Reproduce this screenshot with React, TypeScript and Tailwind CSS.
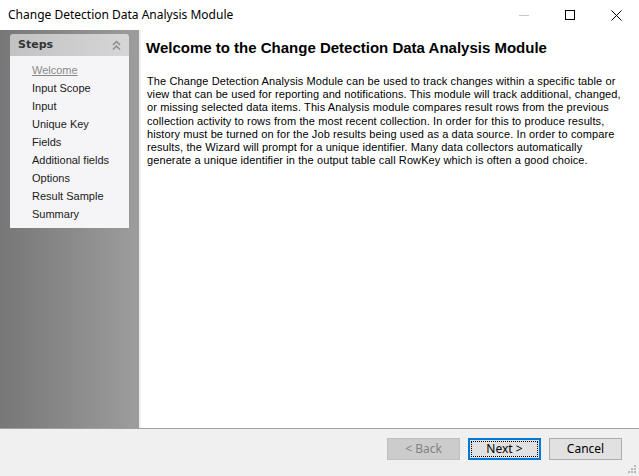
import React from "react";

const steps = [
  "Welcome",
  "Input Scope",
  "Input",
  "Unique Key",
  "Fields",
  "Additional fields",
  "Options",
  "Result Sample",
  "Summary",
];

const bodyLines = [
  "The Change Detection Analysis Module can be used to track changes within a specific table or",
  "view that can be used for reporting and notifications. This module will track additional, changed,",
  "or missing selected data items. This Analysis module compares result rows from the previous",
  "collection activity to rows from the most recent collection. In order for this to produce results,",
  "history must be turned on for the Job results being used as a data source. In order to compare",
  "results, the Wizard will prompt for a unique identifier. Many data collectors automatically",
  "generate a unique identifier in the output table call RowKey which is often a good choice.",
];

function TitleBar() {
  return (
    <div className="flex h-[30px] items-center bg-white pl-[8px]">
      <span className="flex-1 text-[12px] text-black" style={{ fontFamily: '"Noto Sans", "Open Sans", sans-serif' }}>
        Change Detection Data Analysis Module
      </span>
      <div className="flex h-full">
        <div className="flex w-[46px] items-center justify-center">
          <div className="h-px w-[10px] bg-[#c8c8c8]" />
        </div>
        <div className="flex w-[46px] items-center justify-center">
          <div className="h-[10px] w-[10px] border border-black" />
        </div>
        <div className="flex w-[46px] items-center justify-center">
          <svg width="11" height="11" viewBox="0 0 11 11">
            <path d="M0.5 0.5 L10.5 10.5 M10.5 0.5 L0.5 10.5" stroke="black" strokeWidth="1" fill="none" />
          </svg>
        </div>
      </div>
    </div>
  );
}

function StepsPanel() {
  return (
    <div className="w-[139px] shrink-0 bg-gradient-to-r from-[#777777] to-[#9d9d9d] px-[10px] pt-[4px]">
      <div className="rounded-t-[3px] bg-gradient-to-r from-[#c2c2c2] to-[#d6d6d6] flex h-[22px] items-center justify-between pl-[8px] pr-[8px]">
        <span className="text-[11px] font-bold text-[#333333]" style={{ fontFamily: "Tahoma, Verdana, 'DejaVu Sans', sans-serif" }}>
          Steps
        </span>
        <svg width="9" height="11" viewBox="0 0 9 11">
          <path d="M1 5 L4.5 1.5 L8 5 M1 9.5 L4.5 6 L8 9.5" stroke="#8a8a8a" strokeWidth="1.5" fill="none" />
        </svg>
      </div>
      <div className="flex flex-col bg-[#f5f5f7] pb-[5px] pl-[22px] pt-[5px]">
        {steps.map((s, i) => (
          <span
            key={s}
            className={
              i === 0
                ? "h-[18px] text-[11px] leading-[18px] text-[#8a8a8a] underline"
                : "h-[18px] text-[11px] leading-[18px] text-[#1a1a1a]"
            }
            style={{ fontFamily: "'Liberation Sans', Arial, sans-serif" }}
          >
            {s}
          </span>
        ))}
      </div>
    </div>
  );
}

function Button({ label, disabled, focused }: { label: string; disabled?: boolean; focused?: boolean }) {
  if (disabled) {
    return (
      <div className="flex h-[22px] w-[73px] items-center justify-center border border-[#bfbfbf] bg-[#cccccc] text-[12px] text-[#838383]">
        {label}
      </div>
    );
  }
  if (focused) {
    return (
      <div className="flex h-[22px] w-[73px] items-center justify-center border-2 border-[#0078d7] bg-[#e1e1e1] p-[1px]">
        <div className="flex h-full w-full items-center justify-center border border-dotted border-black text-[12px] text-black">
          {label}
        </div>
      </div>
    );
  }
  return (
    <div className="flex h-[22px] w-[73px] items-center justify-center border border-[#adadad] bg-[#e1e1e1] text-[12px] text-black">
      {label}
    </div>
  );
}

export default function App() {
  return (
    <div className="flex h-[476px] w-[639px] flex-col overflow-hidden bg-white" style={{ fontFamily: "'Liberation Sans', Arial, sans-serif" }}>
      <TitleBar />
      <div className="flex flex-1 border-b border-[#a0a0a0]">
        <StepsPanel />
        <div className="w-[2px] bg-[#f0f0f0]" />
        <div className="flex-1 bg-white pl-[5px] pt-[9px]">
          <h1 className="text-[15px] font-bold leading-[18px] text-black" style={{ fontFamily: "'Liberation Sans', Arial, sans-serif" }}>
            Welcome to the Change Detection Data Analysis Module
          </h1>
          <div className="mt-[18px] pl-[1px] text-[11px] leading-[13.3px] tracking-[0.1px] text-black">
            {bodyLines.map((l) => (
              <div key={l} className="h-[13.2px] whitespace-nowrap">
                {l}
              </div>
            ))}
          </div>
        </div>
      </div>
      <div className="relative flex h-[47px] items-start justify-end gap-[8px] bg-[#f0f0f0] pr-[17px] pt-[9px]" style={{ fontFamily: "'Noto Sans', 'Open Sans', sans-serif" }}>
        <Button label="< Back" disabled />
        <Button label="Next >" focused />
        <Button label="Cancel" />
        <svg className="absolute bottom-[2px] right-[2px]" width="10" height="10" viewBox="0 0 10 10">
          <rect x="7" y="1" width="2" height="2" fill="#b8b8b8" />
          <rect x="4" y="4" width="2" height="2" fill="#b8b8b8" />
          <rect x="7" y="4" width="2" height="2" fill="#b8b8b8" />
          <rect x="1" y="7" width="2" height="2" fill="#b8b8b8" />
          <rect x="4" y="7" width="2" height="2" fill="#b8b8b8" />
          <rect x="7" y="7" width="2" height="2" fill="#b8b8b8" />
        </svg>
      </div>
    </div>
  );
}
